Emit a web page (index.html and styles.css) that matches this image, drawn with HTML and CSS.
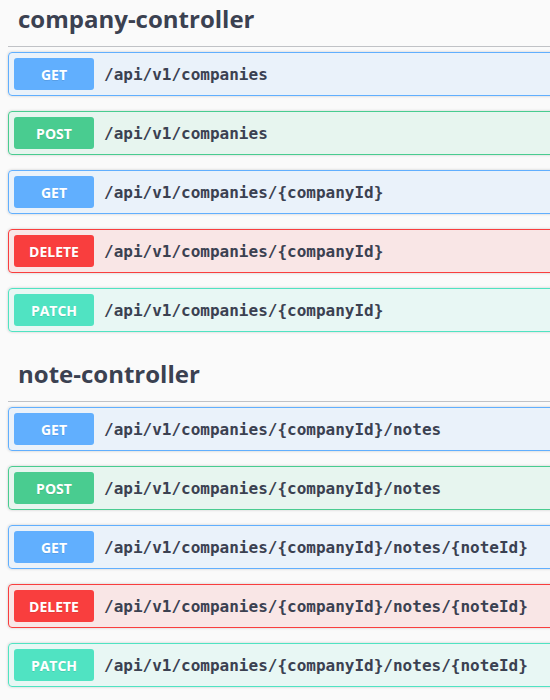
FILE: index.html
```html
<!DOCTYPE html>
<html lang="en">
<head>
<meta charset="utf-8">
<title>Swagger UI</title>
<link rel="stylesheet" href="styles.css">
</head>
<body>
<div class="wrapper">
  <section class="tag-section first">
    <h3 class="opblock-tag">company-controller</h3>
    <div class="opblock get"><div class="summary"><span class="method">GET</span><span class="path">/api/v1/companies</span></div></div>
    <div class="opblock post"><div class="summary"><span class="method">POST</span><span class="path">/api/v1/companies</span></div></div>
    <div class="opblock get"><div class="summary"><span class="method">GET</span><span class="path">/api/v1/companies/{companyId}</span></div></div>
    <div class="opblock delete"><div class="summary"><span class="method">DELETE</span><span class="path">/api/v1/companies/{companyId}</span></div></div>
    <div class="opblock patch"><div class="summary"><span class="method">PATCH</span><span class="path">/api/v1/companies/{companyId}</span></div></div>
  </section>
  <section class="tag-section">
    <h3 class="opblock-tag">note-controller</h3>
    <div class="opblock get"><div class="summary"><span class="method">GET</span><span class="path">/api/v1/companies/{companyId}/notes</span></div></div>
    <div class="opblock post"><div class="summary"><span class="method">POST</span><span class="path">/api/v1/companies/{companyId}/notes</span></div></div>
    <div class="opblock get"><div class="summary"><span class="method">GET</span><span class="path">/api/v1/companies/{companyId}/notes/{noteId}</span></div></div>
    <div class="opblock delete"><div class="summary"><span class="method">DELETE</span><span class="path">/api/v1/companies/{companyId}/notes/{noteId}</span></div></div>
    <div class="opblock patch"><div class="summary"><span class="method">PATCH</span><span class="path">/api/v1/companies/{companyId}/notes/{noteId}</span></div></div>
  </section>
</div>
</body>
</html>
```
FILE: styles.css
```css
html, body {
  margin: 0;
  padding: 0;
  background: #fafafa;
  overflow: hidden;
}
.wrapper {
  padding-left: 8px;
  width: 600px;
}
.tag-section {
  display: flex;
  flex-direction: column;
}
.opblock-tag {
  margin: 0 0 5px;
  padding: 10px 20px 10px 10px;
  font-family: "Open Sans", "Noto Sans", sans-serif;
  font-weight: 700;
  font-size: 24px;
  line-height: 34px;
  color: #3b4151;
  border-bottom: 1px solid rgba(59, 65, 81, 0.3);
}
.first .opblock-tag {
  padding-top: 2px;
}
.opblock {
  margin: 0 0 15px;
  border: 1px solid #000;
  border-radius: 4px;
  box-shadow: 0 0 3px rgba(0, 0, 0, 0.19);
}
.summary {
  display: flex;
  align-items: center;
  padding: 5px;
}
.method {
  width: 80px;
  height: 32px;
  display: flex;
  align-items: center;
  justify-content: center;
  border-radius: 3px;
  font-family: "Open Sans", "Noto Sans", sans-serif;
  font-weight: 700;
  font-size: 14px;
  color: #fff;
  text-shadow: 0 1px 0 rgba(0, 0, 0, 0.1);
}
.path {
  padding: 0 10px;
  font-family: "DejaVu Sans Mono", monospace;
  font-weight: 700;
  font-size: 16px;
  color: #3b4151;
}
.get { border-color: #61affe; background: rgba(97, 175, 254, 0.1); }
.get .method { background: #61affe; }
.post { border-color: #49cc90; background: rgba(73, 204, 144, 0.1); }
.post .method { background: #49cc90; }
.delete { border-color: #f93e3e; background: rgba(249, 62, 62, 0.1); }
.delete .method { background: #f93e3e; }
.patch { border-color: #50e3c2; background: rgba(80, 227, 194, 0.1); }
.patch .method { background: #50e3c2; }
```
